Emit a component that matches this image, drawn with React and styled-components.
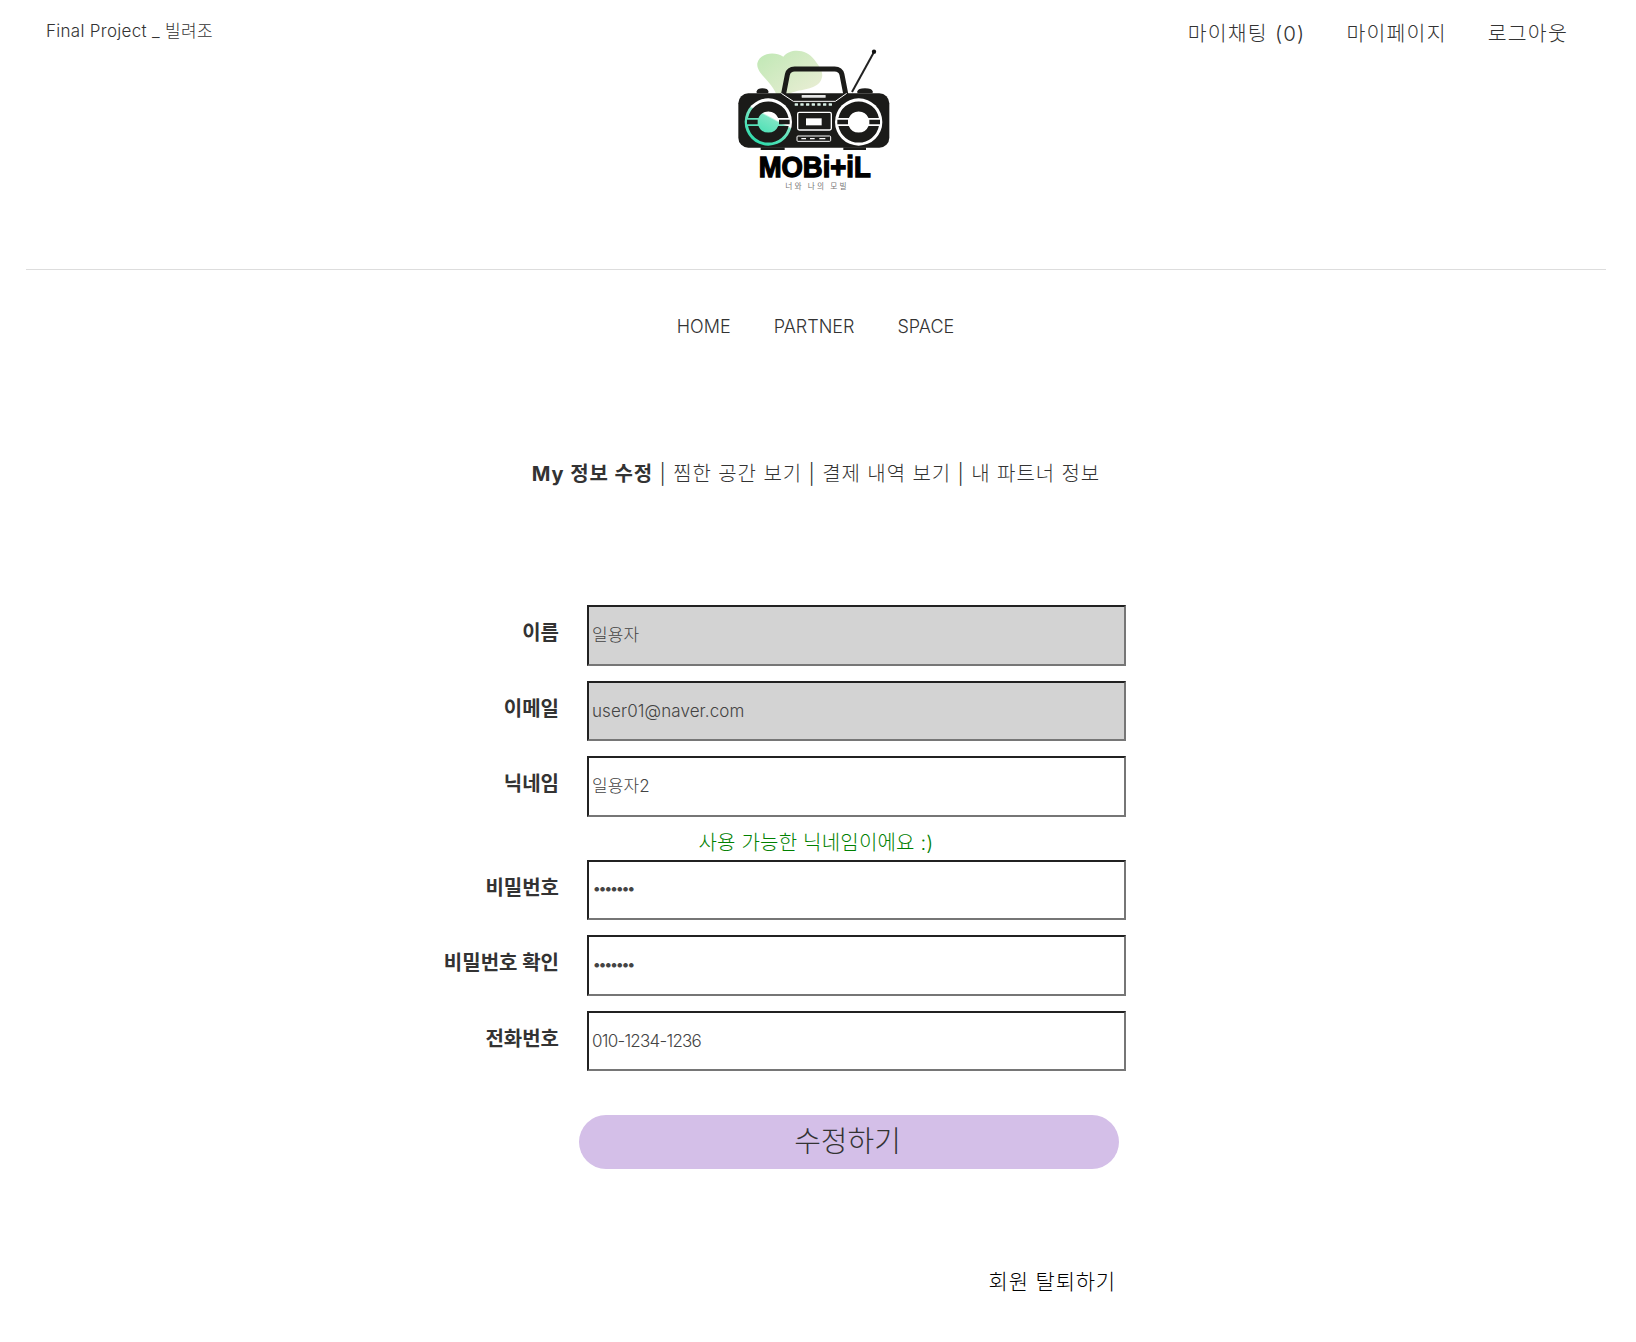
import React from "react";
import styled, { createGlobalStyle } from "styled-components";

const Global = createGlobalStyle`
  html, body { margin: 0; padding: 0; background: #fff; overflow: hidden; }
  body { font-family: Inter, "Noto Sans CJK KR", sans-serif; color: #333; }
  * { box-sizing: border-box; }
`;
const FONT = `Inter, "Noto Sans CJK KR", sans-serif`;

const Page = styled.div`
  width: 1636px;
  height: 1342px;
  display: flex;
  flex-direction: column;
`;
const Header = styled.header`
  height: 270px;
  margin: 0 30px 0 26px;
  border-bottom: 1px solid #ddd;
  display: grid;
  grid-template-columns: 674px 220px 1fr;
  align-items: start;
`;
const Brand = styled.div`
  padding: 20px 0 0 20px;
  font-size: 17px;
  line-height: 22px;
  letter-spacing: 0.3px;
  font-weight: 300;
`;
const LogoSlot = styled.div`
  padding-top: 30px;
  display: flex;
`;
const UserMenu = styled.nav`
  display: flex;
  justify-content: flex-end;
  gap: 41px;
  padding: 20px 38px 0 0;
`;
const UserLink = styled.a`
  font-size: 20.5px;
  line-height: 28px;
  letter-spacing: 1.2px;
  font-weight: 300;
  white-space: nowrap;
`;
const MainNav = styled.nav`
  display: flex;
  justify-content: center;
  gap: 43px;
  padding: 45px 5px 0 0;
`;
const MainLink = styled.a`
  font-size: 18px;
  line-height: 24px;
  font-weight: 300;
`;
const Tabs = styled.div`
  margin-top: 120px;
  padding-right: 4px;
  text-align: center;
  font-size: 20px;
  line-height: 30px;
  letter-spacing: 0.9px;
  font-weight: 300;
  white-space: nowrap;
`;
const ActiveTab = styled.b`
  font-weight: 700;
`;
const Form = styled.form`
  margin-top: 116px;
  display: flex;
  flex-direction: column;
`;
const Field = styled.div`
  display: grid;
  grid-template-columns: 559px 539px;
  column-gap: 28px;
  height: 60.5px;
  margin-bottom: ${(p) => (p.$tight ? "0" : "15px")};
`;
const Label = styled.label`
  text-align: right;
  font-size: 20px;
  line-height: 28px;
  font-weight: 700;
  padding-top: 14px;
`;
const Input = styled.input`
  width: 539px;
  height: 60.5px;
  border: 2px inset rgb(118, 118, 118);
  border-radius: 0;
  padding: ${(p) => (p.$latin ? "0 3px" : "0 3px 3px")};
  margin: 0;
  outline: none;
  font-family: ${FONT};
  font-size: 17px;
  font-weight: 300;
  color: #444;
  background: ${(p) => (p.$locked ? "#d3d3d3" : "#fff")};
  letter-spacing: ${(p) => (p.type === "password" ? "-3.8px" : p.$numeric ? "-0.75px" : "0.1px")};
`;
const Message = styled.div`
  height: 43px;
  line-height: 52px;
  padding-right: 4px;
  text-align: center;
  font-size: 20px;
  letter-spacing: 0.2px;
  font-weight: 300;
  color: green;
`;
const Submit = styled.button`
  display: block;
  width: 540px;
  height: 54px;
  margin: 29px 0 0 579px;
  padding: 0 3px 7px 0;
  border: 0;
  border-radius: 27px;
  background: #d4bfe8;
  color: #333;
  font-family: ${FONT};
  font-size: 29px;
  font-weight: 300;
`;
const Withdraw = styled.a`
  align-self: flex-end;
  margin: 99px 520px 0 0;
  font-size: 21px;
  line-height: 28px;
  letter-spacing: 0.8px;
  font-weight: 300;
  color: #000;
`;

const INK = "#1b1b19";

const Speaker = ({ cx, cy, fill }) => (
  <g>
    <circle cx={cx} cy={cy} r="71" fill={fill} />
    <path
      d={`M${cx - 60.8} ${cy - 12}A62 62 0 0 1 ${cx + 60.8} ${cy - 12}H${cx + 29.6}A32 32 0 0 0 ${cx - 29.6} ${cy - 12}Z`}
      fill={INK}
    />
    <path
      d={`M${cx - 60.8} ${cy + 12}A62 62 0 0 0 ${cx + 60.8} ${cy + 12}H${cx + 29.6}A32 32 0 0 1 ${cx - 29.6} ${cy + 12}Z`}
      fill={INK}
    />
    <path d={`M${cx - 64} ${cy}H${cx - 32}M${cx + 32} ${cy}H${cx + 64}`} stroke={INK} strokeWidth="14" />
  </g>
);

const Logo = () => (
  <svg width="220" height="170" viewBox="0 0 660 510">
    <defs>
      <linearGradient id="blob" x1="0" y1="0" x2="1" y2="1">
        <stop offset="0" stopColor="#bfe8b4" />
        <stop offset="1" stopColor="#eeeed8" />
      </linearGradient>
      <linearGradient id="teal" x1="0.75" y1="0.1" x2="0.3" y2="0.95">
        <stop offset="0.36" stopColor="#fff" />
        <stop offset="0.4" stopColor="#7ce6c4" />
        <stop offset="1" stopColor="#30dcac" />
      </linearGradient>
    </defs>
    <path d="M172 100C178 70 222 62 250 80C272 52 322 58 342 88C356 108 378 128 360 156C340 182 296 176 268 192L232 205C224 158 168 134 172 100Z" fill="url(#blob)" />
    <path d="M456 186L522 66" stroke="#222" strokeWidth="6" />
    <circle cx="522" cy="65" r="6.5" fill="#111" />
    <path d="M170 190V184Q172 175 187 175Q204 175 205 184V190Z" fill={INK} />
    <path d="M472 190V184Q474 175 495 175Q516 175 518 184V190Z" fill={INK} />
    <rect x="115" y="190" width="453" height="163" rx="30" fill={INK} />
    <path d="M250 196L262 134Q266 117 284 117H404Q422 117 426 134L438 196" fill="none" stroke={INK} strokeWidth="15" />
    <path d="M244 190L280 214H406L440 190" fill="none" stroke="#fff" strokeWidth="3" />
    <rect x="305" y="195" width="72" height="8" rx="1" fill="#e6e6e6" />
    <g fill="#d8efe6">
      {[284, 301, 318, 335, 352, 369, 386].map((x) => (
        <rect key={x} x={x} y="220" width="10" height="7" rx="1" />
      ))}
    </g>
    <Speaker cx={205} cy={276} fill="url(#teal)" />
    <Speaker cx={476} cy={276} fill="#fff" />
    <rect x="293" y="247" width="101" height="53" rx="5" fill="none" stroke="#fff" strokeWidth="4" />
    <rect x="318" y="265" width="47" height="21" fill="#fff" />
    <rect x="291" y="318" width="101" height="16" rx="3" fill="none" stroke="#fff" strokeWidth="3" />
    <path d="M304 326H318M330 326H344M358 326H376" stroke="#fff" strokeWidth="4" />
    <rect x="182" y="352" width="72" height="8" fill={INK} />
    <rect x="430" y="352" width="68" height="8" fill={INK} />
    <text x="176" y="441" fontFamily="Liberation Sans, sans-serif" fontWeight="700" fontSize="88" textLength="336" lengthAdjust="spacingAndGlyphs" stroke="#000" strokeWidth="4" fill="#000">MOBi+iL</text>
    <text x="256" y="476" fontFamily="Noto Sans CJK KR, sans-serif" fontSize="23" textLength="184" fill="#777">너와 나의 모빌</text>
  </svg>
);

export default function App() {
  return (
    <Page>
      <Global />
      <Header>
        <Brand>Final Project _ 빌려조</Brand>
        <LogoSlot>
          <Logo />
        </LogoSlot>
        <UserMenu>
          <UserLink>마이채팅 (0)</UserLink>
          <UserLink>마이페이지</UserLink>
          <UserLink>로그아웃</UserLink>
        </UserMenu>
      </Header>
      <MainNav>
        <MainLink>HOME</MainLink>
        <MainLink>PARTNER</MainLink>
        <MainLink>SPACE</MainLink>
      </MainNav>
      <Tabs>
        <ActiveTab>My 정보 수정</ActiveTab> | 찜한 공간 보기 | 결제 내역 보기 | 내 파트너 정보
      </Tabs>
      <Form onSubmit={(e) => e.preventDefault()}>
        <Field>
          <Label>이름</Label>
          <Input $locked readOnly value="일용자" />
        </Field>
        <Field>
          <Label>이메일</Label>
          <Input $locked $latin readOnly value="user01@naver.com" />
        </Field>
        <Field $tight>
          <Label>닉네임</Label>
          <Input readOnly value="일용자2" />
        </Field>
        <Message>사용 가능한 닉네임이에요 :)</Message>
        <Field>
          <Label>비밀번호</Label>
          <Input readOnly type="password" value="1234567" />
        </Field>
        <Field>
          <Label>비밀번호 확인</Label>
          <Input readOnly type="password" value="1234567" />
        </Field>
        <Field>
          <Label>전화번호</Label>
          <Input $numeric $latin readOnly value="010-1234-1236" />
        </Field>
        <Submit>수정하기</Submit>
        <Withdraw>회원 탈퇴하기</Withdraw>
      </Form>
    </Page>
  );
}
